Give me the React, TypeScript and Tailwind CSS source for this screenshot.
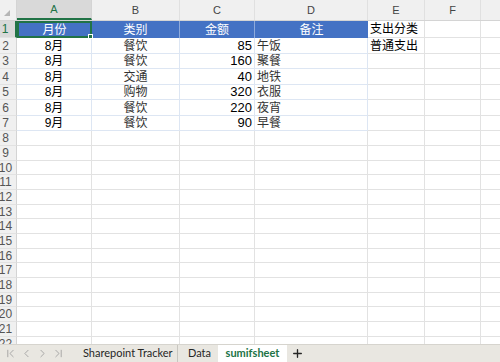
import { ChevronFirst, ChevronLast, ChevronLeft, ChevronRight, Plus } from 'lucide-react';

const cols = [
  { key: 'A', w: 'w-[75px]' },
  { key: 'B', w: 'w-[88px]' },
  { key: 'C', w: 'w-[75px]' },
  { key: 'D', w: 'w-[113px]' },
  { key: 'E', w: 'w-[57px]' },
  { key: 'F', w: 'w-[56px]' },
  { key: 'G', w: 'w-[40px]' },
];

const rows = [
  { month: '8月', kind: '餐饮', amount: '85', note: '午饭', e: '普通支出' },
  { month: '8月', kind: '餐饮', amount: '160', note: '聚餐', e: '' },
  { month: '8月', kind: '交通', amount: '40', note: '地铁', e: '' },
  { month: '8月', kind: '购物', amount: '320', note: '衣服', e: '' },
  { month: '8月', kind: '餐饮', amount: '220', note: '夜宵', e: '' },
  { month: '9月', kind: '餐饮', amount: '90', note: '早餐', e: '' },
];

const dataHeights = ['h-[16px]', 'h-[15px]', 'h-[16px]', 'h-[15px]', 'h-[16px]', 'h-[15px]'];
const emptyHeights = [
  'h-[15px]', 'h-[15px]', 'h-[14px]', 'h-[15px]', 'h-[15px]', 'h-[14px]', 'h-[15px]',
  'h-[15px]', 'h-[14px]', 'h-[15px]', 'h-[15px]', 'h-[14px]', 'h-[15px]', 'h-[15px]',
];

const font = "font-['Liberation_Sans','Noto_Sans_CJK_SC',sans-serif]";

function RowHead({ n, h, active }: { n: number; h: string; active?: boolean }) {
  return (
    <div
      className={`${h} w-[17px] shrink-0 flex items-center pr-[5px] justify-center text-[12px] border-b border-[#e2e2e2] ${
        active ? 'bg-[#d9d9d9] text-[#217346] border-r-2 border-r-[#217346]' : 'bg-[#f0f0f0] text-[#555] border-r border-r-[#d4d4d4]'
      }`}
    >
      {n}
    </div>
  );
}

export default function App() {
  return (
    <div className={`w-[500px] h-[362px] overflow-hidden bg-white flex flex-col ${font} text-black`}>
      {/* column letters */}
      <div className="flex h-[21px] shrink-0 bg-[#f0f0f0] border-b border-[#d4d4d4]">
        <div className="w-[17px] shrink-0 relative border-r border-[#d4d4d4]">
          <div className="absolute left-[4px] bottom-[4px] w-0 h-0 border-l-[6px] border-l-transparent border-b-[6px] border-b-[#b5b5b5]" />
        </div>
        {cols.map((c, i) => (
          <div
            key={c.key}
            className={`${c.w} shrink-0 flex items-center justify-center text-[11px] ${
              i === 0
                ? 'bg-[#d9d9d9] text-[#217346] border-b-2 border-[#217346] border-r border-r-[#d4d4d4]'
                : 'text-[#444] border-r border-[#e0e0e0]'
            }`}
          >
            {c.key === 'G' ? '' : c.key}
          </div>
        ))}
      </div>

      {/* row 1 */}
      <div className="flex h-[17px] shrink-0 text-[12px]">
        <RowHead n={1} h="h-[17px]" active />
        <div className="w-[75px] shrink-0 relative bg-[#4472c4] text-white flex items-center justify-center border-2 border-[#217346]">
          月份
          <div className="absolute -right-[3px] -bottom-[3px] w-[5px] h-[5px] bg-[#217346] border border-white" />
        </div>
        <div className="w-[88px] shrink-0 bg-[#4472c4] text-white flex items-center justify-center border-r border-[#8eaadb]">类别</div>
        <div className="w-[75px] shrink-0 bg-[#4472c4] text-white flex items-center justify-center border-r border-[#8eaadb]">金额</div>
        <div className="w-[113px] shrink-0 bg-[#4472c4] text-white flex items-center justify-center">备注</div>
        <div className="w-[57px] shrink-0 flex items-center pl-[2px] border-r border-b border-[#e2e2e2]">支出分类</div>
        <div className="w-[56px] shrink-0 border-r border-b border-[#e2e2e2]" />
        <div className="w-[40px] shrink-0 border-b border-[#e2e2e2]" />
      </div>

      {rows.map((r, i) => (
        <div key={i} className="flex shrink-0 text-[12px]">
          <RowHead n={i + 2} h={dataHeights[i]} />
          <div className={`${dataHeights[i]} w-[75px] shrink-0 flex items-center justify-center border-r border-b border-[#dde6f3]`}>{r.month}</div>
          <div className={`${dataHeights[i]} w-[88px] shrink-0 flex items-center justify-center text-[#333] border-r border-b border-[#dde6f3]`}>{r.kind}</div>
          <div className={`${dataHeights[i]} w-[75px] shrink-0 flex items-center justify-end pr-[2px] text-[13px] border-r border-b border-[#dde6f3]`}>{r.amount}</div>
          <div className={`${dataHeights[i]} w-[113px] shrink-0 flex items-center pl-[2px] text-[#333] border-r border-b border-[#dde6f3]`}>{r.note}</div>
          <div className={`${dataHeights[i]} w-[57px] shrink-0 flex items-center pl-[2px] border-r border-b border-[#e2e2e2]`}>{r.e}</div>
          <div className={`${dataHeights[i]} w-[56px] shrink-0 border-r border-b border-[#e2e2e2]`} />
          <div className={`${dataHeights[i]} w-[40px] shrink-0 border-b border-[#e2e2e2]`} />
        </div>
      ))}

      {emptyHeights.map((h, i) => (
        <div key={i} className="flex shrink-0">
          <RowHead n={i + 8} h={h} />
          {cols.map((c) => (
            <div key={c.key} className={`${h} ${c.w} shrink-0 border-r border-b border-[#e2e2e2]`} />
          ))}
        </div>
      ))}

      {/* row 22, partly hidden behind the tab bar */}
      <div className="flex-1 min-h-0 overflow-hidden flex items-start">
        <RowHead n={22} h="h-[15px]" />
        {cols.map((c) => (
          <div key={c.key} className={`h-[15px] ${c.w} shrink-0 border-r border-[#e2e2e2]`} />
        ))}
      </div>

      {/* sheet tabs */}
      <div className="h-[18px] shrink-0 flex items-stretch bg-[#e9e7e1] text-[11px] font-['Lato','Liberation_Sans',sans-serif] border-t border-[#d6d4ce]">
        <div className="w-[74px] shrink-0 flex items-center gap-[3px] pl-[4px] text-[#9a9a9a]">
          <ChevronFirst size={13} strokeWidth={1.5} />
          <ChevronLeft size={13} strokeWidth={1.5} />
          <ChevronRight size={13} strokeWidth={1.5} />
          <ChevronLast size={13} strokeWidth={1.5} />
        </div>
        <div className="w-[104px] shrink-0 pl-[9px] flex items-center text-[#262626] border-r border-[#c8c6c0]">Sharepoint Tracker</div>
        <div className="w-[40px] shrink-0 pl-[10px] flex items-center text-[#262626]">Data</div>
        <div className="w-[69px] shrink-0 flex items-center justify-center bg-white text-[#217346] font-bold">sumifsheet</div>
        <div className="px-[4px] flex items-center text-[#262626]">
          <Plus size={13} strokeWidth={2.5} />
        </div>
      </div>
    </div>
  );
}
